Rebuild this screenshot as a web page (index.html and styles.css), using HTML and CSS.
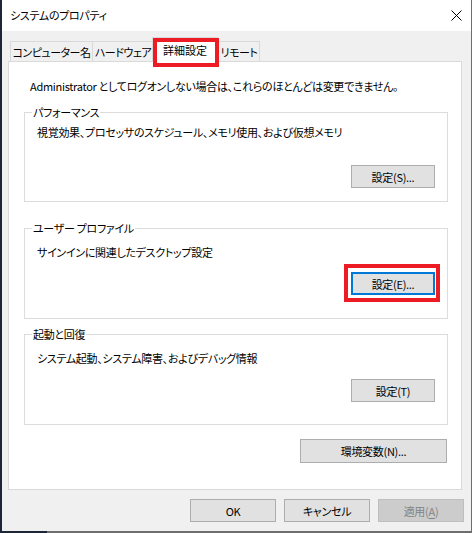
FILE: index.html
```html
<!DOCTYPE html>
<html lang="ja">
<head>
<meta charset="utf-8">
<title>システムのプロパティ</title>
<link rel="stylesheet" href="styles.css">
</head>
<body>
<div class="window">
  <div class="titlebar">
    <span class="title">システムのプロパティ</span>
    <svg class="close" width="11" height="11" viewBox="0 0 11 11"><path d="M0.5 0.5L10.5 10.5M10.5 0.5L0.5 10.5" stroke="#000" stroke-width="1" fill="none"/></svg>
  </div>
  <div class="client">
    <div class="tabs">
      <div class="tab t1">コンピューター名</div>
      <div class="tab t2">ハードウェア</div>
      <div class="tab active">詳細設定<span class="mark mark-tab"></span></div>
      <div class="tab t4">リモート</div>
    </div>
    <div class="panel">
      <p class="note">Administrator としてログオンしない場合は、これらのほとんどは変更できません。</p>
      <div class="group g1">
        <div class="legend">パフォーマンス</div>
        <p class="desc">視覚効果、プロセッサのスケジュール、メモリ使用、および仮想メモリ</p>
        <button class="btn small">設定(S)...</button>
      </div>
      <div class="group g2">
        <div class="legend">ユーザー プロファイル</div>
        <p class="desc">サインインに関連したデスクトップ設定</p>
        <div class="focus-wrap">
          <button class="btn small focus">設定(E)...</button>
          <span class="mark mark-btn"></span>
        </div>
      </div>
      <div class="group g3">
        <div class="legend">起動と回復</div>
        <p class="desc">システム起動、システム障害、およびデバッグ情報</p>
        <button class="btn small">設定(T)</button>
      </div>
      <button class="btn env">環境変数(N)...</button>
    </div>
    <div class="actions">
      <button class="btn act">OK</button>
      <button class="btn act">キャンセル</button>
      <button class="btn act disabled">適用(<u>A</u>)</button>
    </div>
  </div>
</div>
</body>
</html>
```

FILE: styles.css
```css
* { box-sizing: border-box; }

html, body {
  margin: 0;
  padding: 0;
}

body {
  width: 472px;
  height: 533px;
  overflow: hidden;
  background: linear-gradient(to right, #1c2636 47px, #6e6e6e 47px);
  font-family: "Noto Sans CJK JP", "Noto Sans", sans-serif;
  font-feature-settings: "palt";
  font-size: 11px;
  letter-spacing: -0.3px;
  line-height: 16px;
  color: #000;
}

.window {
  margin-left: 2px;
  width: 469px;
  height: 531px;
  display: flex;
  flex-direction: column;
  background: #f0f0f0;
}

.titlebar {
  height: 31px;
  flex: none;
  background: #fff;
  display: flex;
  align-items: center;
  justify-content: space-between;
  padding: 0 9px 0 8px;
}

.title {
  display: block;
  line-height: 16px;
  margin-top: -1px;
}

.close {
  display: block;
}

.client {
  flex: 1;
  display: flex;
  flex-direction: column;
  padding-top: 6px;
}

.tabs {
  display: flex;
  align-items: flex-end;
  height: 25px;
  margin: 0 0 -1px 8px;
  position: relative;
  z-index: 1;
}

.tab {
  height: 20px;
  margin-bottom: 1px;
  border: 1px solid #d9d9d9;
  border-bottom: none;
  background: #f0f0f0;
  display: flex;
  align-items: center;
  justify-content: center;
  white-space: nowrap;
  letter-spacing: -0.5px;
}

.t1 { width: 83px; }
.t2 { width: 62px; margin-left: -1px; }
.t4 { width: 42px; }

.tab.active {
  position: relative;
  width: 66px;
  height: 25px;
  margin-bottom: 0;
  margin-left: -2px;
  background: #fff;
  padding-bottom: 1px;
  letter-spacing: 0;
}

.mark {
  position: absolute;
  border: 4px solid #ed1c24;
  pointer-events: none;
}

.mark-tab {
  left: 0;
  top: 0;
  width: 66px;
  height: 29px;
}

.panel {
  margin-left: 6px;
  width: 454px;
  height: 429px;
  flex: none;
  border: 1px solid #d9d9d9;
  background: #fff;
  display: flex;
  flex-direction: column;
}

.note {
  margin: 16px 0 0 21px;
  white-space: nowrap;
}

p { margin: 0; }

.group {
  margin: 0 13px 0 15px;
  border: 1px solid #dcdcdc;
  padding: 0 12px;
  display: flex;
  flex-direction: column;
}

.legend {
  align-self: flex-start;
  margin: -9px 0 0 -5px;
  padding: 0 1px;
  background: #fff;
  white-space: nowrap;
}

.desc { white-space: nowrap; }

.g1 { margin-top: 18px; padding-bottom: 13px; }
.g1 .desc { margin-top: 4px; }
.g1 .btn { margin-top: 25px; }

.g2 { margin-top: 26px; padding-bottom: 23px; }
.g2 .desc { margin-top: 8px; }
.g2 .focus-wrap { margin-top: 12px; }

.g3 { margin-top: 15px; padding-bottom: 22px; }
.g3 .desc { margin-top: 8px; }
.g3 .btn { margin-top: 13px; }

.btn {
  font: inherit;
  font-feature-settings: "palt";
  letter-spacing: -0.3px;
  color: #000;
  background: #e1e1e1;
  border: 1px solid #adadad;
  border-radius: 0;
  padding: 0;
  margin: 0;
  height: 23px;
  line-height: 16px;
  display: flex;
  align-items: center;
  justify-content: center;
  white-space: nowrap;
}

.small {
  width: 84px;
  align-self: flex-end;
}

.focus-wrap {
  align-self: flex-end;
  position: relative;
}

.btn.focus {
  border: 2px solid #0078d7;
}

.mark-btn {
  left: -7px;
  top: -8px;
  width: 96px;
  height: 38px;
}

.env {
  align-self: flex-end;
  width: 147px;
  height: 24px;
  margin: 14px 14px 0 0;
}

.actions {
  margin-top: 9px;
  display: flex;
  justify-content: flex-end;
  gap: 8px;
  padding-right: 7px;
}

.act { width: 86px; }

.btn.disabled {
  background: #cccccc;
  border-color: #bfbfbf;
  color: #838383;
}

.btn u {
  text-decoration: underline;
  text-underline-offset: 2px;
}
```
